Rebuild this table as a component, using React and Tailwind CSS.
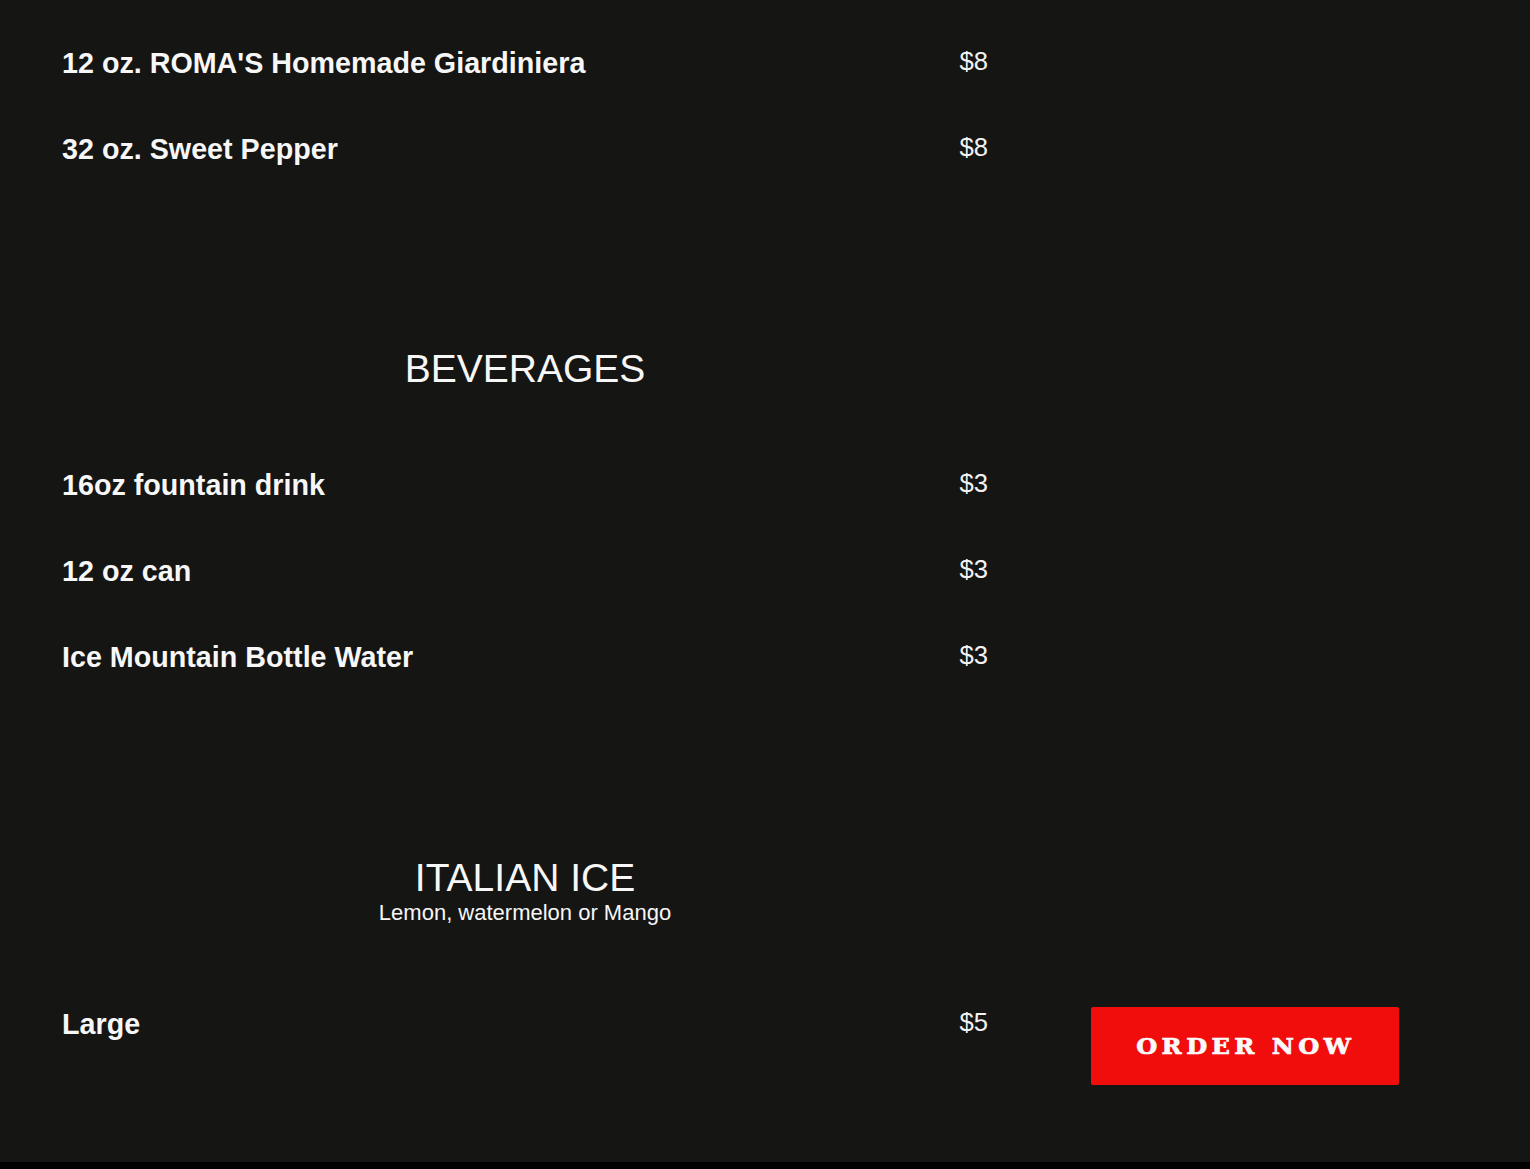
export default function App() {
  const Row = ({ name, price }) => (
    <div className="flex items-start justify-between h-[86px] py-[23px]">
      <div className="text-[28.7px] leading-[40px] font-bold text-[#f7f7f7]">{name}</div>
      <div className="text-[25.6px] leading-[36px] text-[#f2f2f2]">{price}</div>
    </div>
  );
  return (
    <div className="bg-black pb-[7px]" style={{ fontFamily: '"Liberation Sans", Arial, sans-serif' }}>
      <div className="bg-[#151513] flex min-h-[1162px]">
        <div className="w-[926px] ml-[62px] pt-[20px] pb-[95px]">
          <Row name="12 oz. ROMA'S Homemade Giardiniera" price="$8" />
          <Row name="32 oz. Sweet Pepper" price="$8" />
          <div className="mt-[155px] mb-[51px] text-center text-[39px] leading-[44px] text-[#f7f7f7]">BEVERAGES</div>
          <Row name="16oz fountain drink" price="$3" />
          <Row name="12 oz can" price="$3" />
          <Row name="Ice Mountain Bottle Water" price="$3" />
          <div className="mt-[156px] mb-[56px] text-center text-[#f7f7f7]">
            <div className="text-[39px] leading-[44px]">ITALIAN ICE</div>
            <div className="text-[22px] leading-[24px] mt-px">Lemon, watermelon or Mango</div>
          </div>
          <Row name="Large" price="$5" />
        </div>
        <div className="flex-1 flex flex-col justify-end pb-[77px] pl-[103px]">
          <a className="w-[308px] h-[78px] bg-[#f20d0d] rounded-[2px] flex items-center justify-center text-[#fafafa]" style={{ fontFamily: '"DejaVu Serif", Georgia, serif' }}>
            <span className="inline-block scale-x-[1.1] text-[22px] font-bold tracking-[4px] pl-[2px] [-webkit-text-stroke:0.7px_#fafafa]">ORDER NOW</span>
          </a>
        </div>
      </div>
    </div>
  );
}
